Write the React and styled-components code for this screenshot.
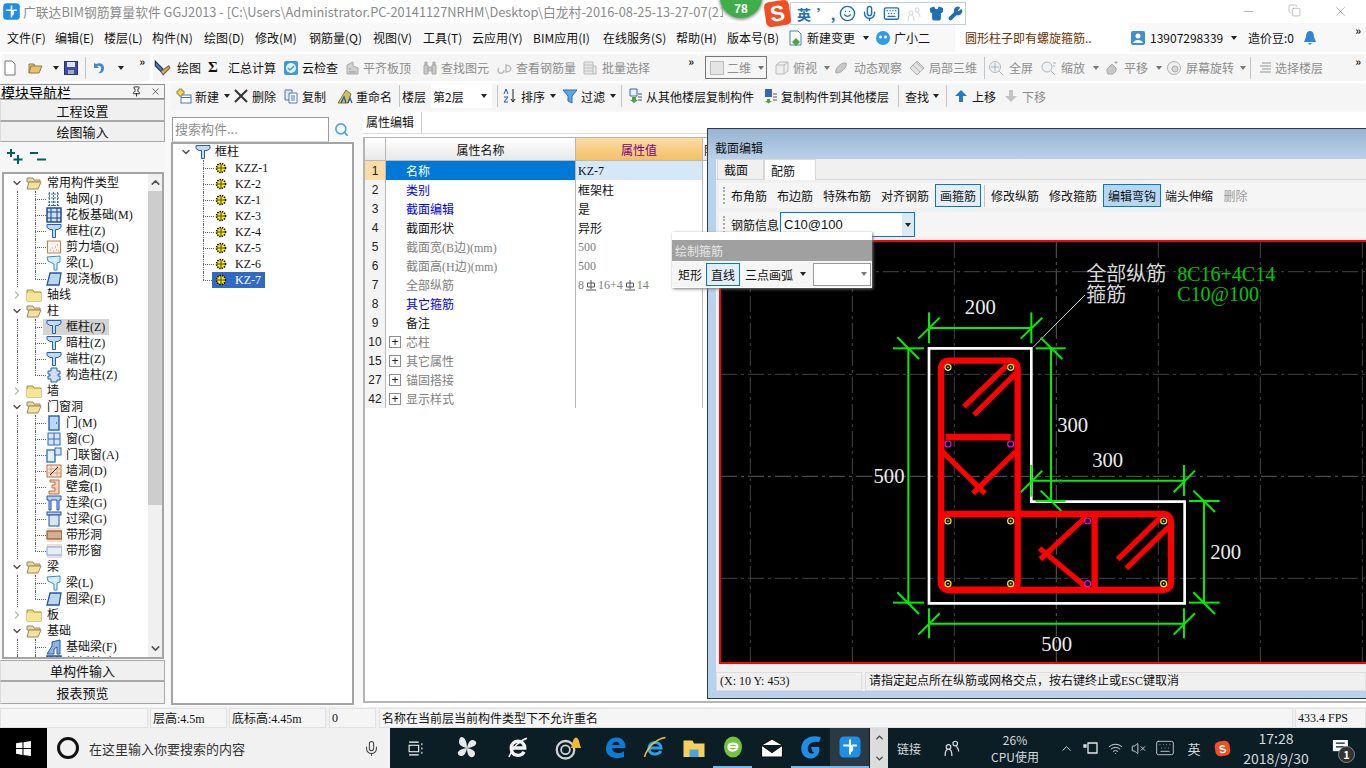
import React from "react";
import styled, { createGlobalStyle } from "styled-components";
import { Mic, Wifi, VolumeX, Keyboard, ChevronUp, ChevronDown, ChevronRight, Search, Minus, X, Copy, Pin, Smile, Wrench, Shirt } from "lucide-react";

const CJK = '"Noto Sans CJK SC", "Noto Sans", sans-serif';
const SIMSUN = '"Liberation Serif", "Noto Sans CJK SC", serif';

const Global = createGlobalStyle`
  html, body { margin: 0; padding: 0; background: #fff; }
  * { box-sizing: border-box; }
  body { font-family: ${CJK}; font-size: 12px; color: #111; }
`;

const Screen = styled.div`
  position: relative;
  width: 1366px;
  height: 768px;
  overflow: hidden;
  display: flex;
  flex-direction: column;
  background: #fff;
`;

/* title bar */
const TitleBar = styled.div`
  height: 23px;
  flex: none;
  display: flex;
  align-items: center;
  padding-left: 2px;
  color: #8a8a8a;
  font-size: 12.8px;
  white-space: nowrap;
  overflow: hidden;
  background: #fff;
`;
const TitleText = styled.span`
  margin-left: 2px;
  width: 700px;
  overflow: hidden;
`;
const WinButtons = styled.div`
  display: flex;
  margin-left: auto;
  margin-right: 3px;
  color: #8c8c8c;
`;
const WinButton = styled.span`
  width: 46px;
  display: flex;
  justify-content: center;
`;

/* menu */
const MenuBar = styled.div`
  height: 29px;
  flex: none;
  display: flex;
  align-items: center;
  padding-left: 7px;
  background: #f8f8f8;
  white-space: nowrap;
`;
const MenuItem = styled.span`
  width: ${(p) => p.$w}px;
  flex: none;
  color: #111;
  display: flex;
  align-items: center;
  gap: ${(p) => p.$gap ?? 0}px;
`;
const NewsBox = styled.span`
  width: 175px;
  height: 29px;
  flex: none;
  background: #fff;
  color: #6b3300;
  display: flex;
  align-items: center;
  padding-left: 10px;
`;
const More = styled.span`
  margin-left: auto;
  margin-right: ${(p) => p.$mr ?? 5}px;
  font-size: 11px;
  font-weight: 700;
  align-self: flex-start;
  line-height: 14px;
  color: #222;
`;

/* toolbars */
const ToolRow = styled.div`
  height: 31px;
  flex: none;
  display: flex;
  align-items: center;
  background: #fff;
  white-space: nowrap;
`;
const Segment = styled.div`
  height: 27px;
  width: ${(p) => p.$w}px;
  margin-left: ${(p) => p.$ml ?? 0}px;
  display: flex;
  align-items: center;
  background: #f5f5f5;
  border-radius: 3px;
`;
const Tool = styled.span`
  display: flex;
  flex: none;
  align-items: center;
  width: ${(p) => p.$w}px;
  gap: ${(p) => p.$gap ?? 3}px;
  color: ${(p) => (p.$off ? "#8d8d8d" : "#111")};
`;
const Caret = styled.i`
  width: 0;
  height: 0;
  margin-left: ${(p) => p.$ml ?? 2}px;
  border: 3px solid transparent;
  border-top: 4px solid ${(p) => (p.$off ? "#777" : "#222")};
  border-bottom: 0;
`;
const Sep = styled.i`
  width: 1px;
  height: 22px;
  flex: none;
  margin-left: ${(p) => p.$l ?? 0}px;
  margin-right: ${(p) => p.$r ?? 0}px;
  background: #c4c4c4;
`;
const ViewCombo = styled.span`
  width: 62px;
  height: 23px;
  flex: none;
  margin-left: 6px;
  margin-right: 7px;
  border: 1px solid #777;
  color: #8d8d8d;
  background: #f5f5f5;
  display: flex;
  align-items: center;
  padding: 0 4px;
  gap: 3px;
`;
const ViewSwatch = styled.i`
  width: 14px;
  height: 14px;
  flex: none;
  background: #e4e4e4;
  border: 1px solid #bbb;
`;
const SigmaMark = styled.b`
  width: 12px;
  font-family: "Liberation Serif", serif;
  font-size: 15px;
  text-align: center;
`;
const FloorCombo = styled.span`
  width: 61px;
  height: 24px;
  flex: none;
  background: #fff;
  display: flex;
  align-items: center;
  justify-content: space-between;
  padding: 0 5px 0 2px;
`;

/* workspace */
const Workspace = styled.div`
  height: 624px;
  flex: none;
  display: flex;
  background: #f8f8f8;
`;
const LeftPanel = styled.div`
  width: 165px;
  flex: none;
  padding-top: 1px;
  display: flex;
  flex-direction: column;
`;
const PanelHead = styled.div`
  height: 15px;
  display: flex;
  align-items: center;
  font-size: 14px;
  line-height: 14px;
  padding-left: 1px;
  border: 1px solid #909090;
  border-left: 0;
  background: #f4f4f4;
  color: #000;
`;
const HeadIcons = styled.span`
  margin-left: auto;
  display: flex;
  gap: 8px;
  padding-right: 3px;
`;
const NavButton = styled.div`
  height: ${(p) => p.$h ?? 22}px;
  margin-top: ${(p) => p.$mt ?? 0}px;
  flex: none;
  display: flex;
  align-items: center;
  justify-content: center;
  font-size: 13px;
  background: #f0f0f0;
  border: 1px solid #a8a8a8;
  border-left-color: #dcdcdc;
`;
const ExpandBar = styled.div`
  height: 30px;
  flex: none;
  display: flex;
  align-items: center;
  gap: 7px;
  padding-left: 7px;
  background: #f6f6f6;
`;
const NavTree = styled.div`
  height: 487px;
  flex: none;
  margin: 0 1px 0 2px;
  border: 2px solid #a4a4a4;
  background: #fff;
  display: flex;
  overflow: hidden;
`;
const NavRows = styled.div`
  width: 144px;
  flex: none;
  padding-top: 1px;
  overflow: hidden;
`;
const ScrollBar = styled.div`
  width: 15px;
  flex: none;
  background: #f0f0f0;
  display: flex;
  flex-direction: column;
  align-items: center;
  color: #555;
`;
const ScrollThumb = styled.div`
  width: 15px;
  height: 314px;
  flex: none;
  background: #cdcdcd;
`;
const TreeRow = styled.div`
  position: relative;
  height: 16px;
  display: flex;
  align-items: center;
  padding-left: ${(p) => p.$pl}px;
  font-family: ${SIMSUN};
  font-size: 12px;
  white-space: nowrap;
  color: #111;

  &::before {
    content: "";
    display: ${(p) => (p.$child ? "block" : "none")};
    position: absolute;
    left: ${(p) => p.$line}px;
    top: 0;
    height: ${(p) => (p.$last ? 8 : 16)}px;
    border-left: 1px dotted #666;
  }
  &::after {
    content: "";
    display: ${(p) => (p.$child ? "block" : "none")};
    position: absolute;
    left: ${(p) => p.$line}px;
    top: 8px;
    width: 11px;
    border-top: 1px dotted #666;
  }
`;
const TrunkLine = styled.i`
  position: absolute;
  left: 13px;
  top: 0;
  height: 16px;
  border-left: 1px dotted #666;
`;
const Fold = styled.span`
  width: 12px;
  display: flex;
  justify-content: center;
  margin-left: 4px;
  margin-right: 3px;
  color: ${(p) => (p.$open ? "#555" : "#bbb")};
`;
const RowLabel = styled.span`
  margin-left: ${(p) => p.$ml ?? 5}px;
  line-height: 16px;
`;
const KidBox = styled.span`
  display: flex;
  align-items: center;
  height: 16px;
  margin-left: ${(p) => -p.$pad}px;
  padding-left: ${(p) => p.$pad}px;
  padding-right: ${(p) => (p.$sel ? 4 : 0)}px;
  background: ${(p) => (p.$sel === "gray" ? "#d4d4d4" : p.$sel ? "#316ac5" : "transparent")};
  color: ${(p) => (p.$sel === true ? "#fff" : "inherit")};
  position: relative;
  z-index: 1;
`;
const RightArea = styled.div`
  flex: 1;
  display: flex;
  flex-direction: column;
  margin-left: 6px;
  min-width: 0;
`;
const EditBar = styled.div`
  height: 26px;
  margin-top: 1px;
  flex: none;
  display: flex;
  align-items: center;
  padding: 0 0 2px 5px;
  background: #f5f5f5;
  white-space: nowrap;
`;
const ContentRow = styled.div`
  flex: 1;
  display: flex;
  min-height: 0;
`;
const TreeColumn = styled.div`
  width: 183px;
  flex: none;
  padding-top: 6px;
  display: flex;
  flex-direction: column;
`;
const SearchRow = styled.div`
  height: 26px;
  flex: none;
  display: flex;
  align-items: center;
`;
const SearchInput = styled.div`
  width: 157px;
  height: 25px;
  margin-left: 1px;
  border: 1px solid #9a9a9a;
  border-bottom-color: #ddd;
  background: #fff;
  color: #8e8e8e;
  font-size: 13px;
  line-height: 22px;
  padding-left: 2px;
`;
const SearchButton = styled.span`
  margin-left: 5px;
  color: #4da3e0;
  display: flex;
`;
const CompTree = styled.div`
  height: 563px;
  flex: none;
  border: 2px solid #a4a4a4;
  background: #fff;
`;
const PropColumn = styled.div`
  flex: 1;
  margin-left: 9px;
  margin-top: 2px;
  background: #fff;
  display: flex;
  flex-direction: column;
  min-width: 0;
`;
const PropTab = styled.div`
  width: 58px;
  height: 21px;
  flex: none;
  margin-left: 1px;
  background: #fff;
  border-right: 1px solid #ccc;
  font-size: 12px;
  padding-left: 2px;
  line-height: 20px;
`;
const TabRule = styled.div`
  height: 4px;
  flex: none;
  border-top: 1px solid #ddd;
`;
const PropTable = styled.div`
  height: 566px;
  flex: none;
  border: 2px solid #b4b4b4;
  border-right: 0;
  border-top-width: 1px;
  background: #fff;
`;
const PropGrid = styled.div`
  display: grid;
  grid-template-columns: 21px 190px 127px 1fr;
  height: ${(p) => p.$h ?? 19}px;
  border-bottom: 1px solid #b9b9b9;
`;
const HeadCell = styled.div`
  display: flex;
  align-items: center;
  justify-content: ${(p) => (p.$left ? "flex-start" : "center")};
  padding-left: ${(p) => (p.$left ? 1 : 0)}px;
  white-space: nowrap;
  font-size: 12px;
  border-right: 1px solid #b9b9b9;
  color: ${(p) => (p.$active ? "#800080" : "#111")};
  background: ${(p) => (p.$active ? "linear-gradient(#fbdca6, #f3c063)" : "linear-gradient(#fff, #e9e9e9)")};
`;
const NumCell = styled.div`
  display: flex;
  align-items: center;
  justify-content: center;
  font-family: "Liberation Sans", sans-serif;
  font-size: 12px;
  color: #222;
  border-right: 1px solid #b9b9b9;
  background: ${(p) => (p.$active ? "#fbdca6" : "#f4f4f4")};
`;
const NameCell = styled.div`
  display: flex;
  align-items: center;
  gap: 3px;
  padding-top: 1px;
  padding-left: ${(p) => (p.$plus ? 3 : 20)}px;
  border-right: 1px solid #b9b9b9;
  font-size: 12px;
  font-family: ${SIMSUN};
  white-space: nowrap;
  color: ${(p) => (p.$sel ? "#fff" : p.$tone === "link" ? "#0000ee" : p.$tone === "gray" ? "#808080" : "#111")};
  background: ${(p) => (p.$sel ? "#0078d7" : "#fff")};
`;
const Plus = styled.span`
  width: 12px;
  height: 12px;
  flex: none;
  border: 1px solid #8c8c8c;
  display: flex;
  align-items: center;
  justify-content: center;
  font-family: "Liberation Sans", sans-serif;
  font-size: 12px;
  line-height: 10px;
  color: #222;
  margin-right: 2px;
`;
const ValueCell = styled.div`
  display: flex;
  align-items: center;
  padding-top: 1px;
  padding-left: 2px;
  border-right: 1px solid #b9b9b9;
  font-size: 12px;
  font-family: ${SIMSUN};
  color: ${(p) => (p.$tone === "gray" ? "#808080" : "#111")};
  background: ${(p) => (p.$sel ? "#d5e8f8" : "#fff")};
`;

/* status bar */
const StatusBar = styled.div`
  height: 21px;
  flex: none;
  display: flex;
  align-items: flex-start;
  padding-top: 1px;
  background: #f0f0f0;
`;
const StatusCell = styled.div`
  width: ${(p) => p.$w}px;
  height: 20px;
  margin-left: ${(p) => p.$ml ?? 2}px;
  flex: ${(p) => (p.$w ? "none" : 1)};
  display: flex;
  align-items: center;
  padding-left: 2px;
  font-family: ${SIMSUN};
  font-size: 12px;
  color: #111;
  white-space: nowrap;
  background: #f5f5f5;
  border: 1px solid #e2e2e2;
`;

/* taskbar */
const Taskbar = styled.div`
  height: 40px;
  flex: none;
  display: flex;
  align-items: stretch;
  background: #0b1e26;
  color: #d6dadc;
  white-space: nowrap;
`;
const StartSlot = styled.div`
  width: 47px;
  background: #000;
  display: flex;
  align-items: center;
  justify-content: center;
`;
const TaskSearch = styled.div`
  width: 343px;
  background: #f1f1f1;
  color: #333;
  font-size: 13px;
  display: flex;
  align-items: center;
  padding-left: 10px;
  gap: 10px;
`;
const SearchRing = styled.i`
  width: 22px;
  height: 22px;
  border: 3px solid #111;
  border-radius: 50%;
`;
const TaskMic = styled.span`
  margin-left: auto;
  margin-right: 10px;
  display: flex;
  color: #444;
`;
const Slot = styled.div`
  position: relative;
  width: ${(p) => p.$w}px;
  flex: none;
  display: flex;
  flex-direction: column;
  align-items: center;
  justify-content: center;
  font-size: ${(p) => p.$fs ?? 12}px;
  line-height: ${(p) => p.$lh ?? 17}px;
  background: ${(p) => (p.$active ? "#2b3a42" : "transparent")};
  border-bottom: ${(p) => (p.$run ? "2px solid #76b9ed" : "0")};
`;
const TrayScroll = styled.div`
  width: 18px;
  flex: none;
  margin-left: 1px;
  background: #dcdcdc;
  color: #444;
  display: flex;
  flex-direction: column;
  justify-content: space-between;
  align-items: center;
  padding: 4px 0;
`;
const NotifyBadge = styled.b`
  position: absolute;
  right: 11px;
  bottom: 5px;
  width: 17px;
  height: 17px;
  border-radius: 50%;
  background: #333;
  border: 1px solid #888;
  color: #fff;
  font-size: 11px;
  line-height: 15px;
  text-align: center;
`;
const Sogou = styled.span`
  display: flex;
  align-items: center;
  justify-content: center;
  width: ${(p) => p.$size}px;
  height: ${(p) => p.$size}px;
  border-radius: 5px;
  transform: rotate(-8deg);
  background: #f04e23;
  color: #fff;
  font: 700 ${(p) => p.$fs}px "Liberation Sans", sans-serif;
`;

/* floating things */
const Ball = styled.div`
  position: absolute;
  left: 720px;
  top: -24px;
  width: 42px;
  height: 42px;
  border-radius: 50%;
  background: #3fae49;
  box-shadow: 0 1px 3px 1px #999;
  color: #fff;
  font: 700 12px "Liberation Sans", sans-serif;
  display: flex;
  align-items: flex-end;
  justify-content: center;
  padding-bottom: 2px;
`;
const ImeBar = styled.div`
  position: absolute;
  left: 765px;
  top: 0;
  height: 26px;
  display: flex;
  align-items: center;
`;
const ImeItems = styled.div`
  width: 176px;
  height: 23px;
  margin-top: 1px;
  background: #fff;
  border: 1px solid #bcd0e0;
  display: flex;
  align-items: center;
  color: #1c6fb8;
  font-weight: 700;
  font-size: 14px;
`;
const ImeSlot = styled.span`
  width: ${(p) => p.$w}px;
  display: flex;
  justify-content: center;
  color: ${(p) => p.$c ?? "inherit"};
`;
const Dialog = styled.div`
  position: absolute;
  left: 707px;
  top: 128px;
  width: 660px;
  height: 571px;
  border: 1px solid #2c3d47;
  display: flex;
  flex-direction: column;
  background: #b9d1ea;
`;
const DialogTitle = styled.div`
  height: 30px;
  flex: none;
  background: linear-gradient(#99b4d1, #b9d1ea);
  font-size: 12px;
  padding: 11px 0 0 7px;
  line-height: 16px;
  color: #111;
`;
const DialogBody = styled.div`
  height: 532px;
  flex: none;
  margin-left: 8px;
  background: #f0f0f0;
  display: flex;
  flex-direction: column;
`;
const TabStrip = styled.div`
  height: 21px;
  flex: none;
  display: flex;
  padding-left: 1px;
  border-bottom: 1px solid #d8d8d8;
`;
const DialogTab = styled.span`
  width: ${(p) => p.$w}px;
  height: ${(p) => (p.$on ? 21 : 20)}px;
  background: ${(p) => (p.$on ? "#fff" : "#f0f0f0")};
  border: 1px solid #d8d8d8;
  border-bottom: 0;
  display: flex;
  align-items: center;
  padding-left: ${(p) => p.$pl}px;
  font-size: 12px;
`;
const DialogTools = styled.div`
  height: 25px;
  flex: none;
  margin-top: ${(p) => p.$mt}px;
  margin-left: 3px;
  display: flex;
  align-items: center;
  white-space: nowrap;
  background: #f5f5f5;
`;
const Grip = styled.i`
  width: 2px;
  height: 17px;
  margin: 0 6px 0 4px;
  flex: none;
  border-left: 2px dotted #aaa;
`;
const DlgTool = styled.span`
  flex: none;
  width: ${(p) => p.$w}px;
  height: 23px;
  display: flex;
  align-items: center;
  justify-content: center;
  margin-right: ${(p) => p.$mr ?? 0}px;
  color: ${(p) => (p.$off ? "#999" : "#111")};
  border: ${(p) => (p.$on || p.$frame ? "1px solid #0078d7" : "0")};
  background: ${(p) => (p.$on ? "#b6d7f2" : p.$frame ? "#e3eef8" : "transparent")};
`;
const InfoCombo = styled.span`
  width: 135px;
  height: 25px;
  flex: none;
  margin-left: 1px;
  background: #fff;
  border: 1px solid #0078d7;
  font: 13px "Liberation Sans", sans-serif;
  display: flex;
  align-items: center;
  justify-content: space-between;
  padding-left: 3px;
`;
const DropBtn = styled.span`
  width: 12px;
  height: 23px;
  background: #dbe9f5;
  display: flex;
  align-items: center;
  justify-content: center;
`;
const Canvas = styled.div`
  width: 648px;
  height: 424px;
  flex: none;
  margin: 3px 0 0 3px;
  background: #000;
  border: 2px solid #f00;
  border-right: 0;
  overflow: hidden;
`;
const DlgStatus = styled.div`
  height: 19px;
  flex: none;
  margin-top: 8px;
  display: flex;
  font-size: 12px;
  font-family: ${SIMSUN};
  gap: 3px;
`;
const DlgStatusCell = styled.span`
  width: ${(p) => p.$w}px;
  flex: ${(p) => (p.$w ? "none" : 1)};
  border: 1px solid #dedede;
  padding-left: 3px;
  line-height: 17px;
  white-space: nowrap;
`;
const Popup = styled.div`
  position: absolute;
  left: 672px;
  top: 232px;
  width: 200px;
  height: 56px;
  background: #fff;
  box-shadow: 1px 1px 3px #777;
  padding-top: 8px;
`;
const PopupTitle = styled.div`
  height: 21px;
  background: #a0a0a0;
  color: #e6e6e6;
  line-height: 21px;
  padding-left: 3px;
  font-size: 12px;
`;
const PopupRow = styled.div`
  height: 26px;
  background: #f5f5f5;
  display: flex;
  align-items: center;
  padding-left: 5px;
`;
const PopupCombo = styled.span`
  width: 58px;
  height: 23px;
  flex: none;
  margin-left: 7px;
  background: #fff;
  border: 1px solid #999;
  display: flex;
  align-items: center;
  justify-content: flex-end;
  padding-right: 3px;
`;

/* drawings */
const G = {
  column: <path d="M1 1.5h14v3l-3 2H9.5v8h-3v-8H4l-3-2z" fill="#c4d9f5" stroke="#2160b8" />,
  net: <path d="M2 3h12M2 7h12M2 11h12M2 14.5h12M3.5 1v14M7.5 1v14M11.5 1v14" fill="none" stroke="#3168b8" strokeDasharray="2 1" />,
  raft: <><rect x="1" y="1" width="14" height="14" fill="#cfe0f5" stroke="#15428b" strokeWidth="1.4" /><path d="M1 5h14M1 11h14M5 1v14M11 1v14" stroke="#15428b" /></>,
  shear: <><rect x="1.5" y="2" width="13" height="12" fill="#f8f2ea" stroke="#d07a45" /><path d="M4 11h1M7 12h1M10 11h1M6 9h1M9 8h1M12 12h1M11 6h1" stroke="#999" /></>,
  beam: <path d="M1 2l13-1v6l-3 1v7H8V9L2 6z" fill="#d8ecfa" stroke="#3d8ad0" />,
  slab: <path d="M4 2h11l-2 12H1z" fill="#bcd6f5" stroke="#1d56ad" strokeWidth="1.3" />,
  conc: <path d="M5 1h6v3h3v3h-2v2h2v4h-3v2H5v-3H2V9h2V7H2V4h3z" fill="#cfe0f5" stroke="#2160b8" />,
  door: <><rect x="3" y="1" width="10" height="14" fill="#bcd6f5" stroke="#2160b8" strokeWidth="1.4" /><path d="M10 8h1" stroke="#123" /></>,
  window: <><rect x="2" y="2" width="12" height="12" fill="#d6e6fa" stroke="#2c6ac0" /><path d="M8 2v12M2 8h12" stroke="#2c6ac0" /></>,
  doorwin: <><rect x="1" y="3" width="8" height="12" fill="#e4effc" stroke="#2c6ac0" strokeWidth="1.3" /><rect x="9" y="1" width="6" height="7" fill="#d6e6fa" stroke="#2c6ac0" /></>,
  hole: <><rect x="1" y="2" width="14" height="12" fill="#f6e7d8" stroke="#c6693a" /><path d="M1 6h14M1 10h14M5 2v12M11 2v12" stroke="#dd9f78" /><path d="M4 12L12 4" stroke="#333" /></>,
  niche: <path d="M4 1h9v14H3v-3h6V9H6V6h3V3H4z" fill="#f6d6bd" stroke="#c6693a" />,
  link: <path d="M1 1h14v4h-2v10h-2V5H5v10H3V5H1z" fill="#b7cff0" stroke="#1d56ad" />,
  over: <><rect x="1" y="1" width="14" height="3" fill="#b7cff0" stroke="#1d56ad" /><rect x="3" y="4" width="10" height="11" fill="#d6e6fa" stroke="#1d56ad" /></>,
  strip: <><rect x="1" y="1" width="15" height="14" fill="#f9dad0" /><rect x="1" y="4" width="15" height="8" fill="#d7ae8b" stroke="#7a4420" /></>,
  stripw: <><rect x="1" y="1" width="15" height="14" fill="#f9dad0" /><rect x="1" y="4" width="15" height="8" fill="#e6effb" stroke="#7da3dc" /></>,
  foot: <path d="M1 15l5-8V3l8-2v14h-3V8l-3 2v5z" fill="#8fb2de" stroke="#1d56ad" />,
  closed: <><path d="M1 3h6l1 2h7v9H1z" fill="#f4d675" stroke="#9a8a62" /><path d="M1 6h14v8H1z" fill="#fbe690" /></>,
  open: <><path d="M1 3h6l1 2h6v2H1z" fill="#eed9a4" stroke="#9a8a62" /><path d="M1 14l2-7h12l-3 7z" fill="#f6e09a" stroke="#9a8a62" /></>,
  stud: <><circle cx="8" cy="8" r="4.5" fill="#ffe900" stroke="#000" strokeDasharray="1.4 1" strokeWidth="1.6" /><path d="M8 4v8M4 8h8" stroke="#444" /></>,
  page: <path d="M3 1h7l3 3v11H3z" fill="#fff" stroke="#777" />,
  fileopen: <path d="M1 13l2-7h11l-3 7zM1 13V4h5l1 2" fill="#e8c270" stroke="#9a7a3a" />,
  save: <><rect x="1.5" y="1.5" width="13" height="13" fill="#3c4fa8" stroke="#23307a" /><rect x="4" y="2" width="8" height="5" fill="#dfe4f5" /><rect x="5" y="10" width="6" height="4" fill="#aab" /></>,
  undo: <path d="M3 3v5h5L6 6c3-1 5 1 4 4-.5 1.5-2 3-3 3 4 1 6-2 6-5 0-4-4-6-8-4z" fill="#3f88d8" />,
  brush: <><path d="M2 2l7 7-2 2-5-5z" fill="#4d7fc8" stroke="#234" /><path d="M7 11l7-5 1 2-6 6z" fill="#d5b04c" stroke="#765" /></>,
  cloud: <><rect x="1" y="1" width="14" height="14" rx="2" fill="#3d9ae0" /><circle cx="8" cy="8" r="5" fill="#e8f4fc" /><path d="M5 8l2 2 4-4" fill="none" stroke="#3d9ae0" strokeWidth="1.4" /></>,
  grayA: <><path d="M3 14V5l6-3v4l5 2v6z" fill="#d0d0d0" stroke="#aaa" /><path d="M5 9h2M5 12h7" stroke="#999" /></>,
  binos: <path d="M2 5h4v9H2zM10 5h4v9h-4zM6 7h4v4H6zM3 2h2v3H3zM11 2h2v3h-2z" fill="#c8c8c8" stroke="#aaa" />,
  sixty: <path d="M2 8a3 3 0 1 0 5 2M9 4v9M9 6a3 3 0 1 1 0 5" fill="none" stroke="#bbb" strokeWidth="1.4" />,
  batch: <path d="M2 2h9v12H2zM2 5h9M2 8h9M2 11h9M11 6h3v8h-3" fill="#e8e8e8" stroke="#bbb" />,
  box: <path d="M2 5l4-3h8v9l-4 3H2zM2 5h8v9M10 5l4-3" fill="#eee" stroke="#bbb" />,
  orbit: <path d="M3 13C1 9 8 2 13 3c2 3-5 11-10 10z" fill="#c8c8c8" stroke="#aaa" />,
  local: <path d="M8 1l7 7-7 7-7-7zM4 5l7 7M7 2l7 7" fill="#e2e2e2" stroke="#b4b4b4" />,
  full: <><circle cx="7" cy="7" r="5.5" fill="#eef2f5" stroke="#b0b8be" /><path d="M7 3v8M3 7h8M11 11l4 4" stroke="#aab2b8" /></>,
  zoom: <><circle cx="6" cy="7" r="5" fill="#eef2f5" stroke="#b0b8be" /><path d="M10 11l4 4M12 3h3M12 6h2" stroke="#aab2b8" /></>,
  hand: <path d="M4 14c-2-3-1-6 1-7l3-3 4 4v3l-3 3zM12 1v3M10.5 2.5h3" fill="#c8c8c8" stroke="#aaa" />,
  rotate: <><circle cx="8" cy="8" r="6.5" fill="#f0f0f0" stroke="#b0b0b0" /><circle cx="9" cy="9" r="3" fill="#d8d8d8" stroke="#aaa" /></>,
  floors: <path d="M5 3h9M3 6h11M5 9h9M3 12h11" stroke="#b4b4b4" strokeWidth="1.6" />,
  newitem: <><rect x="5" y="7" width="10" height="8" fill="#fff" stroke="#4a78b8" /><path d="M5 9.5h10" stroke="#4a78b8" /><path d="M3 1h3v2h2v3H6v2H3V6H1V3h2z" fill="#f5d468" stroke="#a08a30" /></>,
  del: <path d="M2 2l12 12M14 2L2 14" stroke="#333" strokeWidth="2" />,
  copy: <><path d="M2 2h7v10H2z" fill="#dfe9f8" stroke="#4a78b8" /><path d="M6 5h8v10H6z" fill="#fff" stroke="#4a78b8" /><path d="M8 8h4M8 10h4M8 12h4" stroke="#4a78b8" /></>,
  rename: <><path d="M1 15L9 2l5 4-3 9z" fill="#cbbf6a" stroke="#8a7a30" /><path d="M4 15l3-6 2 6M11 15l2-5 2 5" fill="none" stroke="#1e55a8" strokeWidth="1.2" /></>,
  sort: <><path d="M2 6l2-5 2 5M2 9h4l-4 5h4" fill="none" stroke="#1e55a8" /><path d="M11 1v13M9 11l2 3 2-3" fill="none" stroke="#222" /></>,
  filter: <path d="M1 2h14L10 8v7l-4-2V8z" fill="#5aa8e5" stroke="#2a6fb5" />,
  from: <><path d="M3 1h7v7H3z" fill="#eaf1fb" stroke="#3a66b0" /><path d="M5 9h4v3h2l-4 3-4-3h2z" fill="#4ca53f" /><path d="M11 6h4M11 9h4M11 12h4" stroke="#555" /></>,
  to: <><path d="M3 1h7v8H3z" fill="#3566b8" /><path d="M5 11h3v2h2l-3.5 2.5L3 13h2z" fill="#4ca53f" /><path d="M11 6h4M11 9h4M11 12h4" stroke="#555" /></>,
  up: <path d="M8 2l6 6h-4v6H6V8H2z" fill="#2b78c8" />,
  down: <path d="M8 14l6-6h-4V2H6v6H2z" fill="#c4c4c4" />,
  fileadd: <><path d="M3 1h8l3 3v11H3z" fill="#fff" stroke="#3f7ec8" /><path d="M9 8l4 4-4 4-4-4z" fill="#4ca53f" /></>,
  mascot: <><circle cx="8" cy="8" r="7" fill="#2f9ce6" /><circle cx="5.5" cy="7" r="1.5" fill="#fff" /><circle cx="10.5" cy="7" r="1.5" fill="#fff" /></>,
  user: <><rect x="1" y="1" width="14" height="14" rx="2" fill="#3f8fcf" /><circle cx="8" cy="6" r="2.5" fill="#fff" /><path d="M3 13c1-4 9-4 10 0z" fill="#fff" /></>,
  bellb: <path d="M8 1c3 0 4 3 4 6l2 5H2l2-5c0-3 1-6 4-6zM6 13h4l-2 2z" fill="#2f84d8" />,
  plusplus: <path d="M4 0v8M0 4h8M11 6v9M6.5 10.5h9" stroke="#00605c" strokeWidth="2" />,
  minusminus: <path d="M0 4h8M7 10.5h9" stroke="#00605c" strokeWidth="2" />,
  appblue: <><rect x="1" y="1" width="14" height="14" rx="3" fill="#1e8fe8" /><path d="M8 3v10M3.5 7h4a2 2 0 1 1 0 4M12.5 7h-3" fill="none" stroke="#fff" strokeWidth="1.3" /></>,
  win: <path d="M1 3l6-1v5.5H1zM8 2l7-1v6.5H8zM1 8.5h6V14l-6-1zM8 8.5h7V15l-7-1z" fill="#fff" />,
  taskview: <path d="M2 2h9M2 14h9M2 5h9v6H2zM14 3v2M14 7v2M14 11v2" fill="none" stroke="#fff" />,
  fan: <path d="M8 8C3 7 2 5 3 2s5-1 5 6c1-5 3-6 5-5s2 4-5 5c5 1 6 3 5 5s-5 2-5-5c-1 5-3 6-5 5S1 9 8 8z" fill="#e6e8ea" />,
  iewhite: <><path d="M3.5 8h9c0-6-9-6-9 0s7 6 8.500 2.500" fill="none" stroke="#f4f4f4" strokeWidth="2.2" /><path d="M2 14C4 8 9 3 14 1.500" fill="none" stroke="#f4f4f4" /></>,
  swirl: <><circle cx="6" cy="9" r="5" fill="none" stroke="#cfd3d5" strokeWidth="1.3" /><circle cx="6" cy="9" r="2.5" fill="none" stroke="#cfd3d5" /><path d="M9 8c1-1 1-6 3-6s2 5 3 6z" fill="#f5b82e" /></>,
  edge: <path d="M2 9c0-5 3-8 7-8s6 3 6 7H6c0 3 5 5 8 2v4c-5 2-12 0-12-5zM6 6h5c0-3-4-3-5 0z" fill="#0f7bd8" />,
  iecolor: <><path d="M4 8h8c0-5-8-5-8 0s6 5 8 2" fill="none" stroke="#2ba0e5" strokeWidth="2" /><path d="M1 14C3 7 9 2 15 1" fill="none" stroke="#f3c23a" /></>,
  folderTask: <><path d="M1 3h6l1 2h7v9H1z" fill="#f6cf5c" /><path d="M5 9h6v5H5z" fill="#4aa3df" /></>,
  greenE: <><ellipse cx="8" cy="8" rx="6" ry="7" fill="#74c33a" /><path d="M5 8h6c0-3-6-3-6 0s4 3 6 1" fill="none" stroke="#fff" strokeWidth="1.4" /></>,
  mail: <path d="M1 6l7-4 7 4v8H1zM1 6l7 5 7-5" fill="#fff" stroke="#111" strokeWidth=".8" />,
  gblue: <path d="M14 2C8 0 2 3 2 9c0 4 3 6 6 6s6-3 5-7H8l1 3h1c-1 2-4 1-4-2 0-3 3-5 7-4z" fill="#1e8fe8" />,
  battery: <path d="M1 5h2v2H1zM5 3h9v10H5z" fill="none" stroke="#e8e8e8" strokeWidth="1.3" />,
  people: <path d="M4 9a2 2 0 1 0 0-4 2 2 0 0 0 0 4zM1 15c0-3 1-6 3-6s3 3 3 6M10 6a2 2 0 1 0 0-4 2 2 0 0 0 0 4zM9 6c2 0 4 2 4 5" fill="none" stroke="#d6dadc" strokeWidth="1.1" />,
  notify: <path d="M1 1h13v10H8l-2 3v-3H1zM4 4h7M4 7h7" fill="#fff" stroke="#0b1e26" />,
};

const Glyph = ({ name, size = 16 }) => (
  <svg width={size} height={size} viewBox="0 0 16 16" style={{ flex: "none", display: "block" }}>
    {G[name]}
  </svg>
);

const menus = [
  ["文件(F)", 48], ["编辑(E)", 49], ["楼层(L)", 48], ["构件(N)", 52], ["绘图(D)", 51], ["修改(M)", 54], ["钢筋量(Q)", 64],
  ["视图(V)", 50], ["工具(T)", 49], ["云应用(Y)", 61], ["BIM应用(I)", 70], ["在线服务(S)", 73], ["帮助(H)", 51], ["版本号(B)", 60],
];

const navTree = [
  { t: "常用构件类型", open: true, kids: [["net", "轴网(J)"], ["raft", "花板基础(M)"], ["column", "框柱(Z)"], ["shear", "剪力墙(Q)"], ["beam", "梁(L)"], ["slab", "现浇板(B)"]] },
  { t: "轴线" },
  { t: "柱", open: true, kids: [["column", "框柱(Z)", "gray"], ["column", "暗柱(Z)"], ["column", "端柱(Z)"], ["conc", "构造柱(Z)"]] },
  { t: "墙" },
  { t: "门窗洞", open: true, kids: [["door", "门(M)"], ["window", "窗(C)"], ["doorwin", "门联窗(A)"], ["hole", "墙洞(D)"], ["niche", "壁龛(I)"], ["link", "连梁(G)"], ["over", "过梁(G)"], ["strip", "带形洞"], ["stripw", "带形窗"]] },
  { t: "梁", open: true, kids: [["beam", "梁(L)"], ["slab", "圈梁(E)"]] },
  { t: "板" },
  { t: "基础", open: true, kids: [["foot", "基础梁(F)"], ["raft", "筏板基础(M)"]] },
];

const props = [
  ["1", "名称", "KZ-7", "", true],
  ["2", "类别", "框架柱", "link"],
  ["3", "截面编辑", "是", "link"],
  ["4", "截面形状", "异形", ""],
  ["5", "截面宽(B边)(mm)", "500", "gray"],
  ["6", "截面高(H边)(mm)", "500", "gray"],
  ["7", "全部纵筋", "rebar", "gray"],
  ["8", "其它箍筋", "", "link"],
  ["9", "备注", "", ""],
  ["10", "芯柱", "", "gray", false, true],
  ["15", "其它属性", "", "gray", false, true],
  ["27", "锚固搭接", "", "gray", false, true],
  ["42", "显示样式", "", "gray", false, true],
];

const RebarMark = () => (
  <svg width="10" height="11" viewBox="0 0 10 11" style={{ margin: "0 2px" }}>
    <path d="M1.5 3h7v4h-7zM5 0v9M0 10h10" fill="none" stroke="#555" />
  </svg>
);

const Tip = ({ name, label, w, gap, off, caret, caretMl, size }) => (
  <Tool $w={w} $gap={gap} $off={off}>
    {name && <Glyph name={name} size={size} />}
    {label && <span>{label}</span>}
    {caret && <Caret $off={off} $ml={caretMl} />}
  </Tool>
);

const gridV = [751.3, 853.3, 955.3, 1057.3, 1159.3, 1261.3, 1363.3];
const gridH = [271.7, 374.3, 476.3, 578.3];

// green dimension lines, in zoomed units of the drawing
const dims = [
  [150, 264, 457, 264], [150, 217, 150, 310], [457, 217, 457, 310], [118, 296, 182, 233], [425, 296, 490, 233],
  [88, 325, 88, 1090], [42, 325, 135, 325], [42, 1088, 135, 1088], [55, 292, 120, 357], [55, 1057, 120, 1122],
  [516, 325, 516, 785], [470, 325, 560, 325], [470, 783, 560, 783], [485, 293, 550, 357], [485, 752, 550, 816],
  [457, 722, 917, 722], [457, 675, 457, 770], [915, 675, 915, 768], [425, 757, 490, 692], [884, 757, 948, 692],
  [975, 783, 975, 1088], [930, 783, 1022, 783], [930, 1088, 1022, 1088], [943, 752, 1008, 816], [943, 1057, 1008, 1122],
  [150, 1151, 915, 1151], [150, 1105, 150, 1195], [915, 1105, 915, 1195], [118, 1184, 182, 1120], [884, 1184, 948, 1120],
];
const hooks = [
  [385, 375, 255, 500], [410, 400, 285, 525], [190, 635, 318, 760], [410, 635, 282, 760],
  [622, 830, 484, 958], [622, 1042, 482, 925], [845, 832, 716, 958], [870, 860, 742, 985],
];
const yellowBars = [[207, 382], [395, 382], [207, 843], [395, 843], [207, 1031], [395, 1031], [854, 843], [854, 1031]];
const purpleBars = [[207, 612], [395, 612], [626, 843], [626, 1031]];
const sizes = [["200", 304, 222], ["300", 581, 575], ["300", 686, 681], ["500", 30, 729], ["200", 1040, 957], ["500", 533, 1232]];

const Section = () => (
  <svg width="646" height="420" viewBox="722 242 646 420" style={{ display: "block" }}>
    {gridV.map((x) => (
      <line key={x} x1={x} x2={x} y1="242" y2="662" stroke={x === 1057.3 ? "#5c5c5c" : "#444"} strokeDasharray="16 4 3 4" />
    ))}
    {gridH.map((y) => (
      <line key={y} y1={y} y2={y} x1="722" x2="1368" stroke={y === 476.3 ? "#5c5c5c" : "#444"} strokeDasharray="16 4 3 4" />
    ))}
    <g transform="translate(880 240) scale(0.3333)">
      <path d="M150 325H457V785H917V1090H150Z" fill="none" stroke="#fff" strokeWidth="8" />
      <line x1="462" y1="322" x2="618" y2="165" stroke="#fff" strokeWidth="2.5" />
      {dims.map((d, i) => (
        <line key={i} x1={d[0]} y1={d[1]} x2={d[2]} y2={d[3]} stroke="#00f000" strokeWidth="6" />
      ))}
      <g fill="none" stroke="#f00" strokeWidth="19">
        <rect x="186" y="362" width="230" height="688" rx="22" />
        <rect x="186" y="822" width="690" height="228" rx="22" />
        <path d="M200 591H395M647 822V1050" />
      </g>
      {hooks.map((d, i) => (
        <line key={i} x1={d[0]} y1={d[1]} x2={d[2]} y2={d[3]} stroke="#f00" strokeWidth="16" />
      ))}
      {yellowBars.map(([x, y]) => (
        <g key={x + "-" + y}>
          <circle cx={x} cy={y} r="9" fill="#000" stroke="#ff0" strokeWidth="3.5" />
          <circle cx={x} cy={y} r="2.5" fill="#ff0" />
        </g>
      ))}
      {purpleBars.map(([x, y]) => (
        <circle key={x + "-" + y} cx={x} cy={y} r="9" fill="#000" stroke="#f0f" strokeWidth="3.5" />
      ))}
      <g fill="#ececec" fontFamily='"Liberation Serif", serif' fontSize="62" textAnchor="middle">
        {sizes.map(([t, x, y]) => (
          <text key={t + x} x={x} y={y}>{t}</text>
        ))}
      </g>
      <text x="538" y="732" fill="#555" fontSize="24" fontFamily="Liberation Sans">0</text>
      <g fill="#d8d8d8" fontFamily={CJK} fontSize="60">
        <text x="622" y="122">全部纵筋</text>
        <text x="622" y="186">箍筋</text>
      </g>
      <g fill="#00c800" fontFamily='"Liberation Serif", serif' fontSize="60">
        <text x="895" y="122">8C16+4C14</text>
        <text x="895" y="184">C10@100</text>
      </g>
    </g>
  </svg>
);

const iconRow = { strokeWidth: 2 };

export default function App() {
  return (
    <Screen>
      <Global />
      <TitleBar>
        <Glyph name="appblue" size={19} />
        <TitleText>广联达BIM钢筋算量软件 GGJ2013 - [C:\Users\Administrator.PC-20141127NRHM\Desktop\白龙村-2016-08-25-13-27-07(216.GGJ12]</TitleText>
        <WinButtons>
          <WinButton><Minus size={15} strokeWidth={1} /></WinButton>
          <WinButton><Copy size={13} strokeWidth={1} /></WinButton>
          <WinButton><X size={15} strokeWidth={1} /></WinButton>
        </WinButtons>
      </TitleBar>

      <MenuBar>
        {menus.map(([m, w]) => (
          <MenuItem key={m} $w={w}>{m}</MenuItem>
        ))}
        <MenuItem $w={88} $gap={4}><Glyph name="fileadd" />新建变更<Caret $ml={4} /></MenuItem>
        <MenuItem $w={80} $gap={3}><Glyph name="mascot" />广小二</MenuItem>
        <NewsBox>圆形柱子即有螺旋箍筋..</NewsBox>
        <MenuItem $w={118} $gap={4}><Glyph name="user" />13907298339<Caret $ml={4} /></MenuItem>
        <MenuItem $w={70} $gap={8}>造价豆:0<Glyph name="bellb" /></MenuItem>
        <More>»</More>
      </MenuBar>

      <ToolRow>
        <Segment $w={148} $ml={2}>
          <Tip name="page" w={26} />
          <Tip name="fileopen" w={35} caret caretMl={6} />
          <Tip name="save" w={22} />
          <Sep $r={5} />
          <Tip name="undo" w={36} caret caretMl={8} />
          <More>»</More>
        </Segment>
        <Segment $w={546} $ml={3}>
          <Tip name="brush" w={54} gap={6} size={18} label="绘图" />
          <Tool $w={76} $gap={9}><SigmaMark>Σ</SigmaMark>汇总计算</Tool>
          <Tip name="cloud" label="云检查" w={61} />
          <Tip name="grayA" label="平齐板顶" w={78} off />
          <Tip name="binos" label="查找图元" w={75} off />
          <Tip name="sixty" label="查看钢筋量" w={85} off />
          <Tip name="batch" label="批量选择" w={80} off gap={4} />
          <More>»</More>
        </Segment>
        <Segment $w={667}>
          <ViewCombo><ViewSwatch />二维<Caret $ml={4} $off /></ViewCombo>
          <Tip name="box" label="俯视" w={59} off caret caretMl={4} />
          <Tip name="orbit" label="动态观察" w={76} gap={5} off />
          <Tip name="local" label="局部三维" w={75} gap={4} off />
          <Sep $r={3} />
          <Tip name="full" label="全屏" w={53} gap={5} off />
          <Tip name="zoom" label="缩放" w={63} gap={4} off caret caretMl={4} />
          <Tip name="hand" label="平移" w={62} gap={4} off caret caretMl={4} />
          <Tip name="rotate" label="屏幕旋转" w={84} gap={4} off caret />
          <Sep $r={6} />
          <Tip name="floors" label="选择楼层" w={70} gap={2} off />
          <More>»</More>
        </Segment>
      </ToolRow>

      <Workspace>
        <LeftPanel>
          <PanelHead>
            模块导航栏
            <HeadIcons>
              <Pin size={11} strokeWidth={2} color="#222" />
              <X size={11} strokeWidth={1.5} color="#333" />
            </HeadIcons>
          </PanelHead>
          <NavButton>工程设置</NavButton>
          <NavButton $h={21}>绘图输入</NavButton>
          <ExpandBar>
            <Glyph name="plusplus" />
            <Glyph name="minusminus" />
          </ExpandBar>
          <NavTree>
            <NavRows>
              {navTree.map((node) => (
                <React.Fragment key={node.t}>
                  <TreeRow $pl={3}>
                    <Fold $open={node.open}>
                      {node.open ? <ChevronDown size={12} strokeWidth={3} /> : <ChevronRight size={12} strokeWidth={3} />}
                    </Fold>
                    <Glyph name={node.open ? "open" : "closed"} />
                    <RowLabel>{node.t}</RowLabel>
                  </TreeRow>
                  {(node.kids || []).map((kid, i) => (
                    <TreeRow key={kid[1] + i} $pl={42} $child $line={31} $last={i === node.kids.length - 1}>
                      <TrunkLine />
                      <KidBox $pad={3} $sel={kid[2]}>
                        <Glyph name={kid[0]} />
                        <RowLabel $ml={4}>{kid[1]}</RowLabel>
                      </KidBox>
                    </TreeRow>
                  ))}
                </React.Fragment>
              ))}
            </NavRows>
            <ScrollBar>
              <ChevronUp size={13} strokeWidth={3} style={{ margin: "2px 0" }} />
              <ScrollThumb />
              <ChevronDown size={13} strokeWidth={3} style={{ marginTop: "auto", marginBottom: 2 }} />
            </ScrollBar>
          </NavTree>
          <NavButton $mt={1} $h={21}>单构件输入</NavButton>
          <NavButton $h={23}>报表预览</NavButton>
        </LeftPanel>

        <RightArea>
          <EditBar>
            <Tip name="newitem" label="新建" w={57} caret />
            <Tip name="del" label="删除" w={50} />
            <Tip name="copy" label="复制" w={54} />
            <Tip name="rename" label="重命名" w={62} />
            <Sep $r={2} />
            <Tool $w={29}>楼层</Tool>
            <FloorCombo>第2层<Caret /></FloorCombo>
            <Sep $l={5} $r={4} />
            <Tip name="sort" label="排序" w={60} caret />
            <Tip name="filter" label="过滤" w={59} caret />
            <Sep $r={5} />
            <Tip name="from" label="从其他楼层复制构件" w={135} />
            <Tip name="to" label="复制构件到其他楼层" w={136} />
            <Sep $r={6} />
            <Tool $w={41} $gap={0}>查找<Caret $ml={4} /></Tool>
            <Sep $r={6} />
            <Tip name="up" label="上移" w={50} />
            <Tip name="down" label="下移" w={50} off />
          </EditBar>
          <ContentRow>
            <TreeColumn>
              <SearchRow>
                <SearchInput>搜索构件...</SearchInput>
                <SearchButton><Search size={15} strokeWidth={2.5} /></SearchButton>
              </SearchRow>
              <CompTree>
                <TreeRow $pl={3}>
                  <Fold $open><ChevronDown size={12} strokeWidth={3} /></Fold>
                  <Glyph name="column" />
                  <RowLabel $ml={4}>框柱</RowLabel>
                </TreeRow>
                {["KZZ-1", "KZ-2", "KZ-1", "KZ-3", "KZ-4", "KZ-5", "KZ-6", "KZ-7"].map((k, i) => (
                  <TreeRow key={k} $pl={40} $child $line={30} $last={i === 7}>
                    <KidBox $pad={1} $sel={i === 7}>
                      <Glyph name="stud" />
                      <RowLabel $ml={6}>{k}</RowLabel>
                    </KidBox>
                  </TreeRow>
                ))}
              </CompTree>
            </TreeColumn>
            <PropColumn>
              <PropTab>属性编辑</PropTab>
              <TabRule />
              <PropTable>
                <PropGrid $h={23}>
                  <HeadCell />
                  <HeadCell>属性名称</HeadCell>
                  <HeadCell $active>属性值</HeadCell>
                  <HeadCell $left>附加</HeadCell>
                </PropGrid>
                {props.map(([n, name, val, tone, sel, plus]) => (
                  <PropGrid key={n}>
                    <NumCell $active={sel}>{n}</NumCell>
                    <NameCell $sel={sel} $tone={tone} $plus={plus}>
                      {plus && <Plus>+</Plus>}
                      {name}
                    </NameCell>
                    <ValueCell $sel={sel} $tone={tone}>
                      {val === "rebar" ? <>8<RebarMark />16+4<RebarMark />14</> : val}
                    </ValueCell>
                    <ValueCell />
                  </PropGrid>
                ))}
              </PropTable>
            </PropColumn>
          </ContentRow>
        </RightArea>
      </Workspace>

      <StatusBar>
        <StatusCell $w={148} $ml={0} />
        <StatusCell $w={77}>层高:4.5m</StatusCell>
        <StatusCell $w={97}>底标高:4.45m</StatusCell>
        <StatusCell $w={47} $ml={3}>0</StatusCell>
        <StatusCell $w={914} $ml={3}>名称在当前层当前构件类型下不允许重名</StatusCell>
        <StatusCell>433.4 FPS</StatusCell>
      </StatusBar>

      <Taskbar>
        <StartSlot><Glyph name="win" size={17} /></StartSlot>
        <TaskSearch>
          <SearchRing />
          在这里输入你要搜索的内容
          <TaskMic><Mic size={17} strokeWidth={1.5} /></TaskMic>
        </TaskSearch>
        <Slot $w={51}><Glyph name="taskview" size={17} /></Slot>
        <Slot $w={51}><Glyph name="fan" size={24} /></Slot>
        <Slot $w={52}><Glyph name="iewhite" size={24} /></Slot>
        <Slot $w={50}><Glyph name="swirl" size={28} /></Slot>
        <Slot $w={42}><Glyph name="edge" size={24} /></Slot>
        <Slot $w={38}><Glyph name="iecolor" size={24} /></Slot>
        <Slot $w={39}><Glyph name="folderTask" size={24} /></Slot>
        <Slot $w={39} $run><Glyph name="greenE" size={24} /></Slot>
        <Slot $w={39}><Glyph name="mail" size={24} /></Slot>
        <Slot $w={39} $run><Glyph name="gblue" size={26} /></Slot>
        <Slot $w={39} $run $active><Glyph name="appblue" size={24} /></Slot>
        <TrayScroll>
          <ChevronUp size={11} strokeWidth={3} />
          <ChevronDown size={11} strokeWidth={3} />
        </TrayScroll>
        <Slot $w={42}>链接</Slot>
        <Slot $w={45}><Glyph name="people" size={18} /></Slot>
        <Slot $w={80}><span>26%</span><span>CPU使用</span></Slot>
        <Slot $w={23}><ChevronUp size={15} strokeWidth={1.5} /></Slot>
        <Slot $w={26}><Glyph name="battery" /></Slot>
        <Slot $w={22}><Wifi size={15} strokeWidth={1.5} /></Slot>
        <Slot $w={24}><VolumeX size={15} strokeWidth={1.5} /></Slot>
        <Slot $w={30}><Keyboard size={20} strokeWidth={1} /></Slot>
        <Slot $w={28} $fs={13}>英</Slot>
        <Slot $w={28}><Sogou $size={15} $fs={11}>S</Sogou></Slot>
        <Slot $w={80} $fs={14} $lh={20}><span>17:28</span><span>2018/9/30</span></Slot>
        <Slot $w={50}><Glyph name="notify" size={20} /><NotifyBadge>1</NotifyBadge></Slot>
      </Taskbar>

      <Ball>78</Ball>
      <ImeBar>
        <Sogou $size={25} $fs={22}>S</Sogou>
        <ImeItems>
          <ImeSlot $w={26}>英</ImeSlot>
          <ImeSlot $w={18}>’,</ImeSlot>
          <ImeSlot $w={24}><Smile size={17} {...iconRow} /></ImeSlot>
          <ImeSlot $w={20}><Mic size={17} {...iconRow} /></ImeSlot>
          <ImeSlot $w={24}><Keyboard size={17} {...iconRow} /></ImeSlot>
          <ImeSlot $w={24} $c="#9aa7b0"><Glyph name="people" size={16} /></ImeSlot>
          <ImeSlot $w={18}><Shirt size={15} fill="#1c6fb8" /></ImeSlot>
          <ImeSlot $w={20}><Wrench size={15} fill="#1c6fb8" /></ImeSlot>
        </ImeItems>
      </ImeBar>

      <Dialog>
        <DialogTitle>截面编辑</DialogTitle>
        <DialogBody>
          <TabStrip>
            <DialogTab $w={47} $pl={6}>截面</DialogTab>
            <DialogTab $w={52} $pl={6} $on>配筋</DialogTab>
          </TabStrip>
          <DialogTools $mt={3}>
            <Grip />
            <DlgTool $w={36} $mr={10}>布角筋</DlgTool>
            <DlgTool $w={36} $mr={10}>布边筋</DlgTool>
            <DlgTool $w={48} $mr={10}>特殊布筋</DlgTool>
            <DlgTool $w={48} $mr={6}>对齐钢筋</DlgTool>
            <DlgTool $w={46} $mr={3} $frame>画箍筋</DlgTool>
            <Sep $r={6} />
            <DlgTool $w={48} $mr={10}>修改纵筋</DlgTool>
            <DlgTool $w={48} $mr={6}>修改箍筋</DlgTool>
            <DlgTool $w={58} $mr={4} $on>编辑弯钩</DlgTool>
            <DlgTool $w={48} $mr={10}>端头伸缩</DlgTool>
            <DlgTool $w={25} $off>删除</DlgTool>
          </DialogTools>
          <DialogTools $mt={4}>
            <Grip />
            <DlgTool $w={48}>钢筋信息</DlgTool>
            <InfoCombo>C10@100<DropBtn><Caret $ml={0} /></DropBtn></InfoCombo>
          </DialogTools>
          <Canvas><Section /></Canvas>
          <DlgStatus>
            <DlgStatusCell $w={146}>(X: 10 Y: 453)</DlgStatusCell>
            <DlgStatusCell>请指定起点所在纵筋或网格交点，按右键终止或ESC键取消</DlgStatusCell>
          </DlgStatus>
        </DialogBody>
      </Dialog>

      <Popup>
        <PopupTitle>绘制箍筋</PopupTitle>
        <PopupRow>
          <DlgTool $w={26} $mr={3}>矩形</DlgTool>
          <DlgTool $w={34} $mr={4} $frame>直线</DlgTool>
          <DlgTool $w={50}>三点画弧</DlgTool>
          <Caret $ml={6} />
          <PopupCombo><Caret $ml={0} $off /></PopupCombo>
        </PopupRow>
      </Popup>
    </Screen>
  );
}
